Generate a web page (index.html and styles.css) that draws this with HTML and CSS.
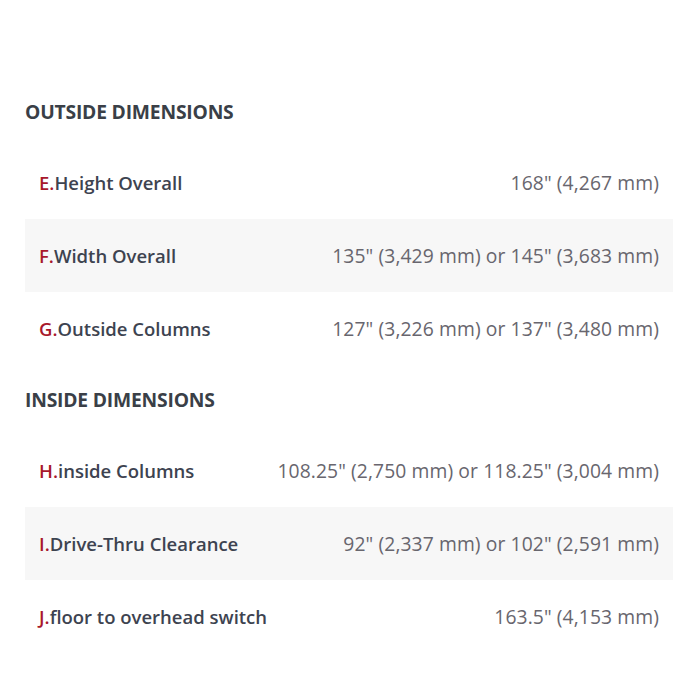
FILE: index.html
```html
<!DOCTYPE html>
<html>
<head>
<meta charset="utf-8">
<link rel="stylesheet" href="styles.css">
</head>
<body>
<div class="page">
  <h2 class="section-title">OUTSIDE DIMENSIONS</h2>
  <div class="spec-list">
    <div class="spec-row"><span class="label"><span class="key">E.</span>Height Overall</span><span class="value">168" (4,267 mm)</span></div>
    <div class="spec-row alt"><span class="label"><span class="key">F.</span>Width Overall</span><span class="value">135" (3,429 mm) or 145" (3,683 mm)</span></div>
    <div class="spec-row"><span class="label"><span class="key">G.</span>Outside Columns</span><span class="value">127" (3,226 mm) or 137" (3,480 mm)</span></div>
  </div>
  <h2 class="section-title second">INSIDE DIMENSIONS</h2>
  <div class="spec-list">
    <div class="spec-row"><span class="label"><span class="key">H.</span>inside Columns</span><span class="value">108.25" (2,750 mm) or 118.25" (3,004 mm)</span></div>
    <div class="spec-row alt"><span class="label"><span class="key">I.</span>Drive-Thru Clearance</span><span class="value">92" (2,337 mm) or 102" (2,591 mm)</span></div>
    <div class="spec-row"><span class="label"><span class="key">J.</span>floor to overhead switch</span><span class="value">163.5" (4,153 mm)</span></div>
  </div>
</div>
</body>
</html>
```
FILE: styles.css
```css
html, body {
  margin: 0;
  padding: 0;
  background: #ffffff;
}
.page {
  padding: 100px 27px 0 25px;
  font-family: "Open Sans", "Noto Sans", sans-serif;
}
.section-title {
  margin: 0 0 22px 0;
  font-size: 19.3px;
  line-height: 24px;
  font-weight: 700;
  color: #3a3f47;
  letter-spacing: -0.2px;
}
.section-title.second {
  margin-top: 23px;
}
.spec-list {
  display: flex;
  flex-direction: column;
}
.spec-row {
  display: flex;
  justify-content: space-between;
  align-items: center;
  height: 73px;
  padding: 0 14px;
}
.spec-row.alt {
  background: #f7f7f7;
}
.label {
  font-size: 18.5px;
  font-weight: 600;
  color: #3d4350;
}
.key {
  color: #a8182c;
}
.value {
  font-size: 19.3px;
  font-weight: 400;
  color: #68666e;
  letter-spacing: 0.1px;
}
```
